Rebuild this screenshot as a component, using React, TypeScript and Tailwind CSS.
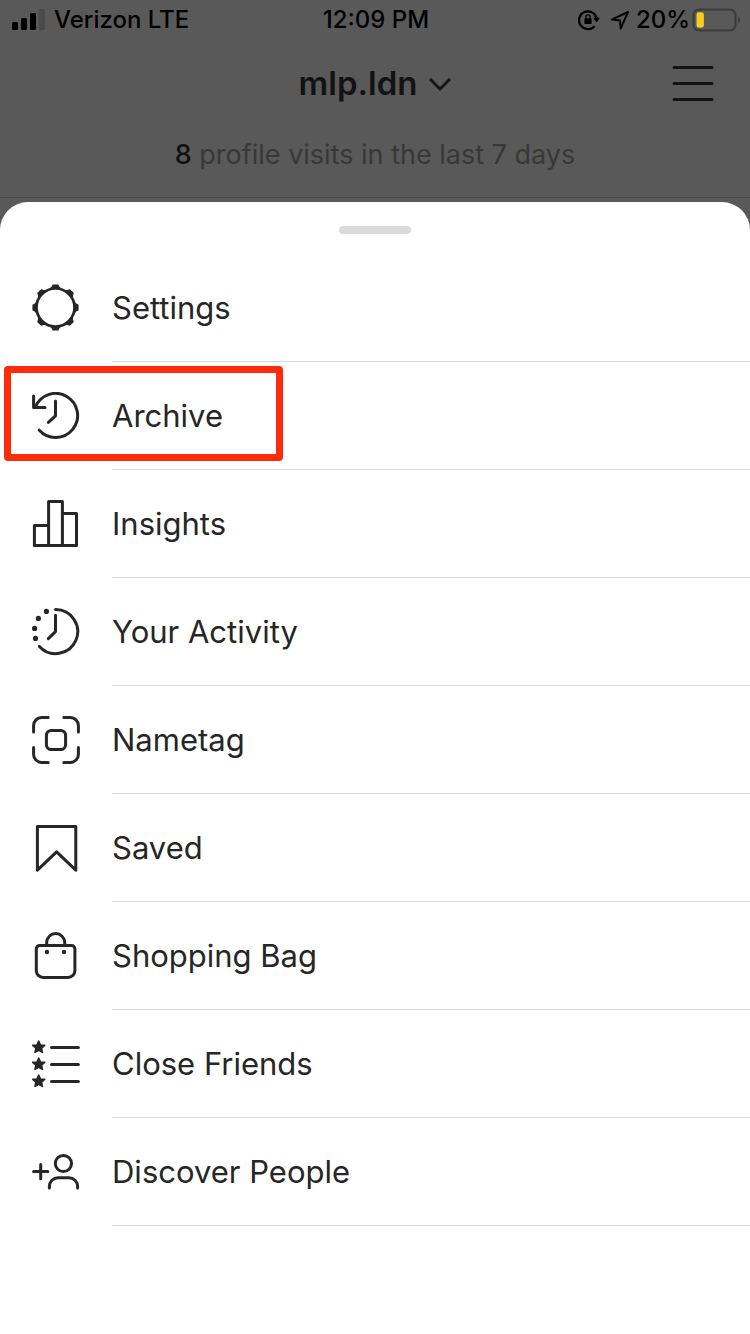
import React from 'react';

interface MenuItem {
  label: string;
  icon: React.ReactNode;
  highlighted?: boolean;
}

const Icon: React.FC<{ children: React.ReactNode }> = ({ children }) => (
  <svg
    viewBox="0 0 48 48"
    className="size-12 shrink-0"
    fill="none"
    stroke="currentColor"
    strokeWidth="3"
    strokeLinecap="round"
    strokeLinejoin="round"
    aria-hidden="true"
  >
    {children}
  </svg>
);

const TEETH = [0, 45, 90, 135, 180, 225, 270, 315];
const STAR = 'M0-5.8 1.8-2 6-1.6 2.8 1.2 3.7 5.4 0 3.2-3.7 5.4-2.8 1.2-6-1.6-1.8-2Z';

const menuItems: MenuItem[] = [
  {
    label: 'Settings',
    icon: (
      <Icon>
        <circle cx="23.5" cy="23.5" r="19" strokeWidth="2.7" />
        {TEETH.map((angle) => (
          <path
            key={angle}
            d="M18.8 4.4 20.2 3 21.1 1.1H25.9L26.8 3 28.2 4.4Z"
            fill="currentColor"
            strokeWidth="1.4"
            transform={`rotate(${angle} 23.5 23.5)`}
          />
        ))}
      </Icon>
    ),
  },
  {
    label: 'Archive',
    highlighted: true,
    icon: (
      <Icon>
        <path d="M7.3 38.2A22 22 0 1 0 3.2 15.2" />
        <path d="M1.6 4V15.5H13" />
        <path d="M23.5 9V23.8L16.4 30.4" />
      </Icon>
    ),
  },
  {
    label: 'Insights',
    icon: (
      <Icon>
        <path d="M16.6 45.4H2.4V25.4H16.6M16.6 45.4V1.6H30.4V45.4ZM30.4 13.5H44.5V45.4H30.4" />
      </Icon>
    ),
  },
  {
    label: 'Your Activity',
    icon: (
      <Icon>
        <path d="M23.5 1.6A22 22 0 1 1 7.4 38.4" />
        <path d="M23.5 7.3V23.6L16.3 30.6" />
        <g fill="currentColor" stroke="none">
          <circle cx="14.4" cy="3.4" r="2.6" />
          <circle cx="6.4" cy="10.4" r="2.6" />
          <circle cx="2.6" cy="20.4" r="2.6" />
          <circle cx="3.5" cy="30.4" r="2.6" />
        </g>
      </Icon>
    ),
  },
  {
    label: 'Nametag',
    icon: (
      <Icon>
        <path d="M1.6 16V9.5A8 8 0 0 1 9.6 1.6H16.2M31.8 1.6H38.4A8 8 0 0 1 46.4 9.5V16M46.4 31.6V38.4A8 8 0 0 1 38.4 46.4H31.8M16.2 46.4H9.6A8 8 0 0 1 1.6 38.4V31.6" />
        <rect x="14.4" y="14.4" width="19.2" height="19.2" rx="5" />
      </Icon>
    ),
  },
  {
    label: 'Saved',
    icon: (
      <Icon>
        <path d="M5.4 2.4H43.8V46.2L24.6 27.8 5.4 46.2Z" />
      </Icon>
    ),
  },
  {
    label: 'Shopping Bag',
    icon: (
      <Icon>
        <path d="M7.6 13.6H39.6A3.3 3.3 0 0 1 42.9 16.9V38.4A7 7 0 0 1 35.9 45.4H11.3A7 7 0 0 1 4.3 38.4V16.9A3.3 3.3 0 0 1 7.6 13.6Z" />
        <path d="M14.7 13V10.6A9 9 0 0 1 32.7 10.6V13" />
        <g fill="currentColor" stroke="none">
          <circle cx="15" cy="20" r="2.2" />
          <circle cx="32" cy="20" r="2.2" />
        </g>
      </Icon>
    ),
  },
  {
    label: 'Close Friends',
    icon: (
      <Icon>
        {[7, 24, 41].map((y) => (
          <g key={y}>
            <path d={STAR} fill="currentColor" strokeWidth="1.6" transform={`translate(6.7 ${y})`} />
            <path d={`M19.5 ${y + 0.4}H46.4`} />
          </g>
        ))}
      </Icon>
    ),
  },
  {
    label: 'Discover People',
    icon: (
      <Icon>
        <path d="M1.6 23.6H15.8M8.7 16.5V30.8" />
        <circle cx="31.4" cy="15.5" r="8.1" />
        <path d="M17.4 40V38.5A8.8 8.8 0 0 1 26.2 29.7H36.8A8.8 8.8 0 0 1 45.6 38.5V40" />
      </Icon>
    ),
  },
];

const StatusBar: React.FC = () => (
  <div className="grid h-10 grid-cols-3 items-center pr-2.5 pl-3 text-2xl font-medium text-black">
    <div className="flex items-center gap-2">
      <svg viewBox="0 0 34 22" className="h-[22px] w-[34px] shrink-0" fill="currentColor" aria-hidden="true">
        <rect x="0" y="13" width="6" height="8" rx="1.6" />
        <rect x="9" y="9" width="6" height="12" rx="1.6" />
        <rect x="18" y="4" width="6" height="17" rx="1.6" />
        <rect x="27" y="0" width="6" height="21" rx="1.6" fill="#4a4a4a" />
      </svg>
      <span className="whitespace-nowrap">Verizon LTE</span>
    </div>
    <span className="text-center">12:09 PM</span>
    <div className="flex items-center justify-end">
      <svg viewBox="0 0 22 22" className="mr-2.5 size-[22px] shrink-0" fill="none" stroke="currentColor" strokeWidth="2.2" aria-hidden="true">
        <path d="M16.6 17.2A8.9 8.9 0 1 1 18.7 9.5" />
        <path d="M15.2 8.8H22L18.6 13.4Z" fill="currentColor" stroke="none" />
        <rect x="6.4" y="9.2" width="7.2" height="5.8" rx="0.8" fill="currentColor" stroke="none" />
        <path d="M7.9 10V8A2.1 2.1 0 0 1 12.1 8V10" strokeWidth="1.4" />
      </svg>
      <svg viewBox="0 0 20 20" className="mr-1.5 size-5 shrink-0" fill="none" stroke="currentColor" strokeWidth="2" strokeLinejoin="round" aria-hidden="true">
        <path d="M18 2 1.8 9.6 10 10.4 10.8 18.4Z" />
      </svg>
      <span>20%</span>
      <svg viewBox="0 0 48 24" className="ml-0.5 h-6 w-12 shrink-0" fill="none" aria-hidden="true">
        <rect x="1.5" y="1.5" width="42" height="21" rx="5.5" stroke="#3c3c3c" strokeWidth="2" />
        <rect x="4.5" y="4.3" width="7.4" height="15.4" rx="2.4" fill="#f5cb1f" />
        <path d="M46 9A3.2 3.2 0 0 1 46 15Z" fill="#3c3c3c" />
      </svg>
    </div>
  </div>
);

const MenuRow: React.FC<{ item: MenuItem }> = ({ item }) => (
  <li className="relative">
    <button type="button" className="flex w-full items-center gap-8 pl-8 text-left">
      {item.icon}
      <span className="flex h-[108px] flex-1 items-center border-b border-[#d9d9d9] pt-0.5">{item.label}</span>
    </button>
    {item.highlighted && (
      <span className="pointer-events-none absolute top-1 left-1 h-[95px] w-[279px] rounded border-[7px] border-[#fb2c0a]" />
    )}
  </li>
);

const App: React.FC = () => {
  return (
    <div className="flex min-h-screen flex-col bg-[#595959] font-[Inter,'Liberation_Sans',sans-serif] text-[#262626]">
      <header className="mb-1 border-b border-[#4a4a4a]">
        <StatusBar />
        <div className="grid h-[88px] grid-cols-[1fr_auto_1fr] items-center px-9 text-[#131313]">
          <button type="button" className="col-start-2 flex items-center gap-3 text-[33px] font-semibold">
            mlp.ldn
            <svg viewBox="0 0 22 14" className="h-[14px] w-[22px]" fill="none" stroke="currentColor" strokeWidth="2.8" aria-hidden="true">
              <path d="M1 2 11 12 21 2" />
            </svg>
          </button>
          <button type="button" aria-label="Menu" className="justify-self-end">
            <svg viewBox="0 0 42 36" className="h-9 w-[42px]" fill="none" stroke="currentColor" strokeWidth="3" strokeLinecap="round" aria-hidden="true">
              <path d="M2 1.5H40M2 17.5H40M2 33.5H40" />
            </svg>
          </button>
        </div>
        <p className="h-[69px] pt-[7px] text-center text-[27px] text-[#383838]">
          <span className="font-medium text-[#101010]">8</span> profile visits in the last 7 days
        </p>
      </header>

      <main className="flex-1 rounded-t-[28px] bg-white pt-6">
        <div className="mx-auto h-2 w-[72px] rounded-full bg-[#dbdbdb]" />
        <ul className="mt-5 text-[31px]">
          {menuItems.map((item) => (
            <MenuRow key={item.label} item={item} />
          ))}
        </ul>
      </main>
    </div>
  );
};

export default App;
